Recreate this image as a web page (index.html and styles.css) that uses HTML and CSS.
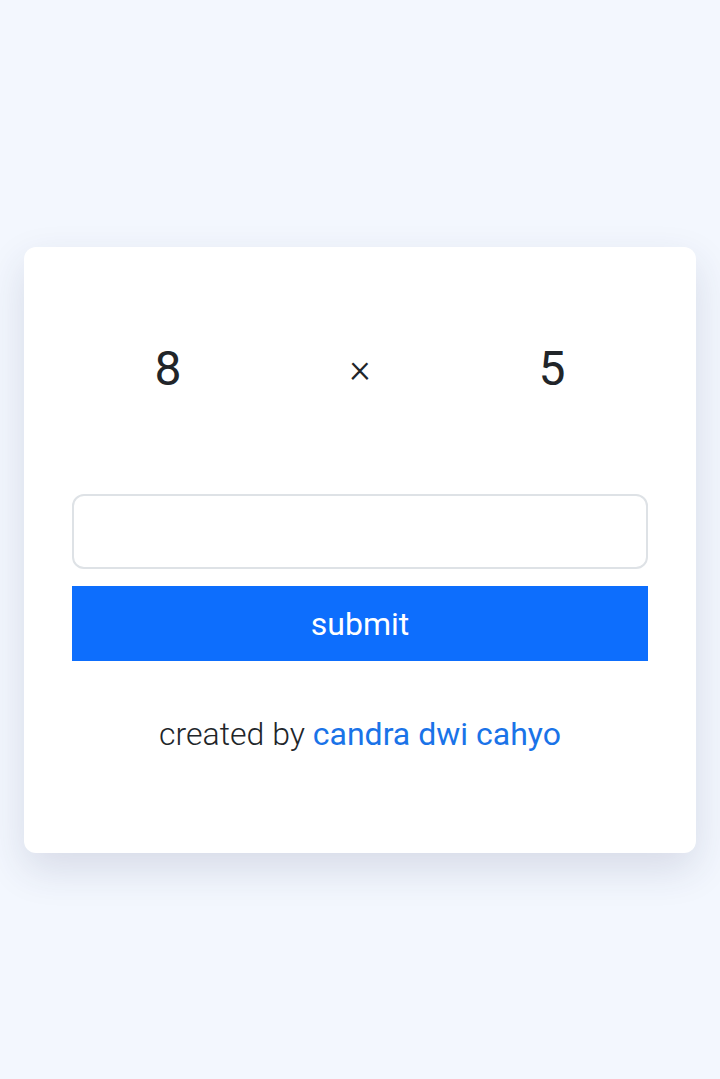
FILE: index.html
```html
<!DOCTYPE html>
<html>
<head>
<meta charset="utf-8">
<link rel="stylesheet" href="styles.css">
</head>
<body>
<main class="page">
  <section class="card">
    <div class="question">
      <span class="num">8</span>
      <span class="op">×</span>
      <span class="num">5</span>
    </div>
    <form class="answer">
      <input class="field" type="text">
      <button class="submit" type="button">submit</button>
    </form>
    <p class="credit">created by <a class="author" href="#">candra dwi cahyo</a></p>
  </section>
</main>
</body>
</html>
```
FILE: styles.css
```css
html, body {
  margin: 0;
  padding: 0;
}
body {
  background: #f3f7fe;
  font-family: Roboto, "Liberation Sans", sans-serif;
  color: #212529;
}
.page {
  height: 1079px;
  display: flex;
  align-items: center;
  justify-content: center;
  padding: 0 24px;
  box-sizing: border-box;
}
.card {
  width: 672px;
  height: 606px;
  margin-top: 21px;
  background: #fff;
  border-radius: 12px;
  box-shadow: 0 16px 40px rgba(40, 50, 90, 0.14);
  padding: 80px 48px 0;
  box-sizing: border-box;
}
.question {
  display: grid;
  grid-template-columns: 1fr 1fr 1fr;
  text-align: center;
  font-size: 48px;
  line-height: 84px;
}
.op {
  font-size: 40px;
  font-weight: 300;
}
.answer {
  margin-top: 83px;
  display: flex;
  flex-direction: column;
  gap: 17px;
}
.field {
  height: 75px;
  border: 2px solid #dee2e6;
  border-radius: 12px;
  box-sizing: border-box;
  font-size: 28px;
  padding: 0 20px;
  margin: 0;
}
.submit {
  height: 75px;
  border: 0;
  background: #0d6efd;
  color: #fff;
  font-family: Roboto, "Liberation Sans", sans-serif;
  font-size: 32px;
  margin: 0;
}
.credit {
  margin: 54px 0 0;
  text-align: center;
  font-size: 32px;
  font-weight: 300;
  color: #212529;
}
.author {
  color: #1a73e8;
  text-decoration: none;
  font-weight: 400;
}
```
